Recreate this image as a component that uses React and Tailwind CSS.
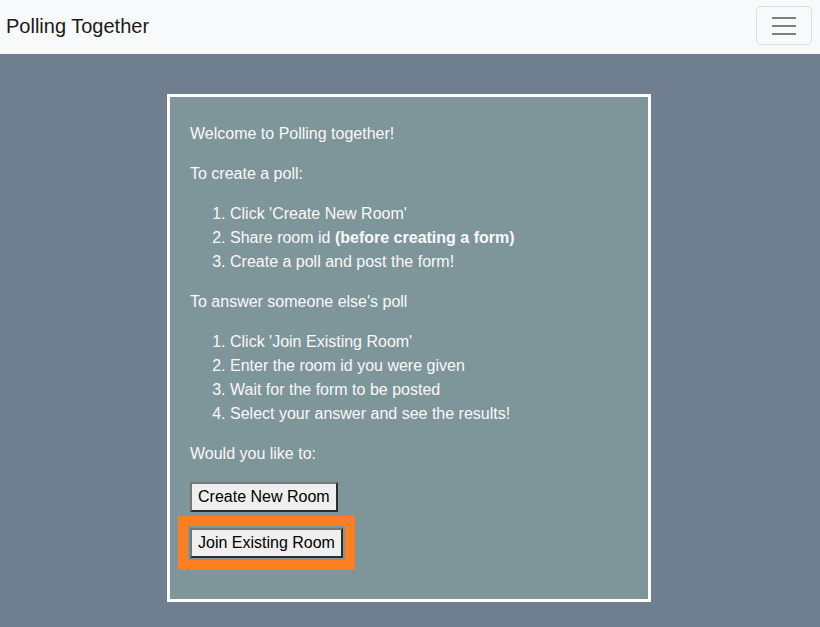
import React from "react";

const Navbar = () => (
  <nav className="h-[54px] bg-[#f8f9fa] flex items-start justify-between pl-[6px] pr-2">
    <span className="mt-[11px] text-[20px] leading-[30px] text-[#1a1a1a]">Polling Together</span>
    <button className="mt-[6px] w-[56px] h-[39px] rounded-[5px] border border-[#dcdddf] flex flex-col items-center justify-center gap-[6px]">
      <span className="block w-[24px] h-[2px] bg-[#808080]" />
      <span className="block w-[24px] h-[2px] bg-[#808080]" />
      <span className="block w-[24px] h-[2px] bg-[#808080]" />
    </button>
  </nav>
);

const btnClass =
  "bg-[#efefef] text-black text-[16px] leading-6 px-[6px] py-[1px] border-2 border-t-[#767676] border-l-[#767676] border-b-[#2b2b2b] border-r-[#2b2b2b]";

const App = () => {
  return (
    <div className="min-h-screen bg-[#708090] font-['Liberation_Sans',Arial,sans-serif]">
      <Navbar />
      <div className="pt-[40px]">
        <div className="w-[484px] mx-auto -translate-x-[1px] border-[3px] border-white bg-[#7e9599] text-[#f8f9fa] text-[16px] leading-6 pt-[25px] pb-[25px] px-[20px]">
          <p className="mb-4">Welcome to Polling together!</p>
          <p className="mb-4">To create a poll:</p>
          <ol className="list-decimal pl-[40px] mb-4">
            <li>Click 'Create New Room'</li>
            <li>
              Share room id <b className="font-bold">(before creating a form)</b>
            </li>
            <li>Create a poll and post the form!</li>
          </ol>
          <p className="mb-4">To answer someone else's poll</p>
          <ol className="list-decimal pl-[40px] mb-4">
            <li>Click 'Join Existing Room'</li>
            <li>Enter the room id you were given</li>
            <li>Wait for the form to be posted</li>
            <li>Select your answer and see the results!</li>
          </ol>
          <p className="mb-4">Would you like to:</p>
          <div className="flex flex-col items-start gap-[16px] mb-4">
            <button className={btnClass}>Create New Room</button>
            <button className={btnClass + " outline-[10px] outline-solid outline-[#fe7f22] outline-offset-[2px]"}>
              Join Existing Room
            </button>
          </div>
        </div>
      </div>
    </div>
  );
};

export default App;
